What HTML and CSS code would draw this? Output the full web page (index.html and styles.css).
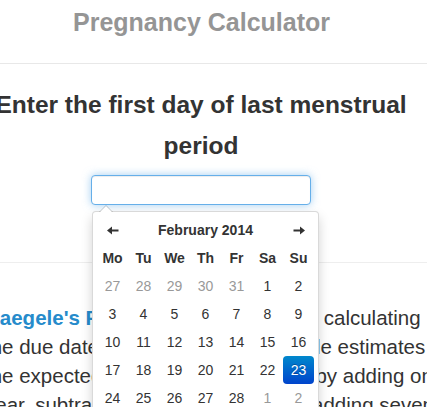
FILE: index.html
```html
<!DOCTYPE html>
<html lang="en">
<head>
<meta charset="utf-8">
<title>Pregnancy Calculator</title>
<link rel="stylesheet" href="styles.css">
</head>
<body>
<header class="site-header">
  <h1 class="site-title">Pregnancy Calculator</h1>
</header>
<main class="calc">
  <section class="lmp">
    <h2 class="lmp-title">Enter the first day of last menstrual period</h2>
    <div class="picker">
      <input class="date-input" type="text" aria-label="First day of last menstrual period">
      <div class="datepicker">
        <table class="dp-table">
          <thead>
            <tr class="dp-nav">
              <th class="dp-arrow"><svg width="12" height="9" viewBox="0 0 12 9"><path d="M0 4.5 L5 0.5 L5 8.5 Z M4 3.5 H11.5 V5.5 H4 Z" fill="#333"/></svg></th>
              <th class="dp-switch" colspan="5">February 2014</th>
              <th class="dp-arrow"><svg width="12" height="9" viewBox="0 0 12 9"><path d="M12 4.5 L7 0.5 L7 8.5 Z M8 3.5 H0.5 V5.5 H8 Z" fill="#333"/></svg></th>
            </tr>
            <tr class="dp-dow">
              <th>Mo</th><th>Tu</th><th>We</th><th>Th</th><th>Fr</th><th>Sa</th><th>Su</th>
            </tr>
          </thead>
          <tbody>
            <tr><td class="old">27</td><td class="old">28</td><td class="old">29</td><td class="old">30</td><td class="old">31</td><td>1</td><td>2</td></tr>
            <tr><td>3</td><td>4</td><td>5</td><td>6</td><td>7</td><td>8</td><td>9</td></tr>
            <tr><td>10</td><td>11</td><td>12</td><td>13</td><td>14</td><td>15</td><td>16</td></tr>
            <tr><td>17</td><td>18</td><td>19</td><td>20</td><td>21</td><td>22</td><td class="active">23</td></tr>
            <tr><td>24</td><td>25</td><td>26</td><td>27</td><td>28</td><td class="new">1</td><td class="new">2</td></tr>
          </tbody>
        </table>
      </div>
    </div>
  </section>
  <section class="about">
    <p><a class="rule-link" href="#">Naegele's Rule</a> is a standard way of calculating the due date for a pregnancy. The rule estimates the expected date of delivery (EDD) by adding one year, subtracting three months, and adding seven days to the first day of a woman's last menstrual period (LMP).</p>
  </section>
</main>
</body>
</html>
```

FILE: styles.css
```css
html, body {
  margin: 0;
  padding: 0;
}

body {
  overflow: hidden;
  background: #fff;
  color: #333;
  font-family: "Liberation Sans", Arial, Helvetica, sans-serif;
}

.site-header {
  border-bottom: 1px solid #e8e8e8;
  padding: 0 24px 19px 0;
}

.site-title {
  margin: 0;
  font-size: 25px;
  line-height: 44px;
  font-weight: bold;
  text-align: center;
  color: #959595;
}

.lmp {
  border-bottom: 1px solid #eee;
  padding: 20px 25px 57px 0;
}

.lmp-title {
  margin: 0 -12px 9px -12px;
  font-size: 24.5px;
  line-height: 41px;
  font-weight: bold;
  text-align: center;
  color: #333;
}

.picker {
  position: relative;
  width: 220px;
  margin: 0 auto;
}

.date-input {
  display: block;
  box-sizing: border-box;
  width: 220px;
  height: 30px;
  margin: 0;
  padding: 4px 10px;
  border: 1px solid #66afe9;
  border-radius: 4px;
  background: #fff;
  box-shadow: inset 0 1px 1px rgba(0, 0, 0, .075), 0 0 8px rgba(102, 175, 233, .6);
  outline: none;
  font: 14px "Liberation Sans", Arial, sans-serif;
}

.datepicker {
  position: absolute;
  top: 36px;
  left: 1px;
  z-index: 10;
  width: max-content;
  padding: 4px;
  background: #fff;
  border: 1px solid rgba(0, 0, 0, .15);
  border-radius: 4px;
  box-shadow: 0 6px 12px rgba(0, 0, 0, .175);
}

.datepicker::before {
  content: "";
  position: absolute;
  top: -7px;
  left: 6px;
  border-left: 7px solid transparent;
  border-right: 7px solid transparent;
  border-bottom: 7px solid rgba(0, 0, 0, .2);
}

.datepicker::after {
  content: "";
  position: absolute;
  top: -6px;
  left: 7px;
  border-left: 6px solid transparent;
  border-right: 6px solid transparent;
  border-bottom: 6px solid #fff;
}

.dp-table {
  width: 217px;
  table-layout: fixed;
  border-collapse: collapse;
  border-spacing: 0;
}

.dp-table th,
.dp-table td {
  width: 31px;
  height: 28px;
  padding: 0;
  text-align: center;
  vertical-align: middle;
  font-size: 14px;
  color: #333;
}

.dp-table th {
  font-weight: bold;
}

.dp-table .dp-switch {
  width: auto;
}

.dp-arrow svg {
  display: block;
  margin: 1px auto 0;
}

.dp-table td.old,
.dp-table td.new {
  color: #999;
}

.dp-table td.active {
  border-radius: 4px;
  color: #fff;
  background-image: linear-gradient(to bottom, #0088cc, #0044cc);
  text-shadow: 0 -1px 0 rgba(0, 0, 0, .25);
}

.about {
  padding-top: 40px;
}

.about p {
  margin: 0 0 0 -15px;
  width: 460px;
  font-size: 20.5px;
  line-height: 29px;
}

.rule-link {
  color: #268bcb;
  font-weight: bold;
  text-decoration: none;
}
```
